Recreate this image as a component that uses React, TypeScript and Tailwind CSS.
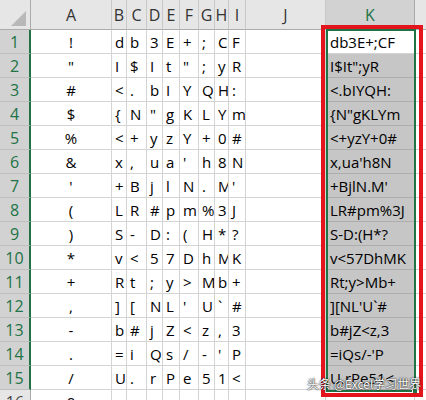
import React from "react";

const cols = ["A", "B", "C", "D", "E", "F", "G", "H", "I", "J", "K"];

const rows: string[] = [
  "db3E+;CF",
  "I$It\";yR",
  "<.bIYQH:",
  "{N\"gKLYm",
  "<+yzY+0#",
  "x,ua'h8N",
  "+BjlN.M'",
  "LR#pm%3J",
  "S-D:(H*?",
  "v<57DhMK",
  "Rt;y>Mb+",
  "][NL'U`#",
  "b#jZ<z,3",
  "=iQs/-'P",
  "U.rPe51<",
];

const font = { fontFamily: "'Open Sans', 'Noto Sans', sans-serif" };

function Row({ n, chars, selected }: { n: number; chars: string; selected: boolean }) {
  const letters = chars.split("");
  return (
    <>
      <div
        className={
          selected
            ? "flex h-6 items-center justify-center border-b border-r-2 border-b-[#bfbfbf] border-r-[#217346] bg-[#d2d2d2] text-[16px] text-[#217346]"
            : "flex h-6 items-center justify-center border-b border-r border-b-[#bfbfbf] border-r-[#ababab] bg-[#e6e6e6] text-[16px] text-[#444]"
        }
      >
        {n}
      </div>
      <div className="flex h-6 items-center justify-center border-b border-r border-[#d4d4d4] pt-[1px] text-[15px] text-black">
        {String.fromCharCode(32 + n)}
      </div>
      {Array.from({ length: 8 }).map((_, i) => (
        <div
          key={i}
          className="flex h-6 items-center overflow-hidden whitespace-pre border-b border-r border-[#d4d4d4] pl-[3px] pt-[1px] text-[15px] text-black"
        >
          {letters[i] === " " ? "" : letters[i]}
        </div>
      ))}
      <div className="h-6 border-b border-r border-[#d4d4d4]" />
      <div
        className={
          n === 1 || !selected
            ? "flex h-6 items-center whitespace-pre border-b border-r border-[#d4d4d4] bg-white pl-[4px] pt-[1px] text-[15px] text-black"
            : "flex h-6 items-center whitespace-pre border-b border-r border-[#adadad] bg-[#c6c6c6] pl-[4px] pt-[1px] text-[15px] text-black"
        }
      >
        {selected ? chars : ""}
      </div>
      <div className="h-6 border-b border-[#d4d4d4]" />
    </>
  );
}

export default function App() {
  return (
    <div className="relative h-[400px] w-[426px] overflow-hidden bg-white" style={font}>
      <div className="grid grid-cols-[31px_81px_15px_20px_16px_17px_19px_16px_14px_17px_80px_89px_1fr]">
        <div className="relative h-[30px] border-b border-r border-[#ababab] bg-[#e6e6e6]">
          <svg className="absolute bottom-[3px] right-[4px]" width="15" height="15" viewBox="0 0 15 15">
            <polygon points="15,0 15,15 0,15" fill="#b8b8b8" />
          </svg>
        </div>
        {cols.map((c) => (
          <div
            key={c}
            className={
              c === "K"
                ? "flex h-[30px] items-end justify-center border-b-2 border-r border-b-[#217346] border-r-[#ababab] bg-[#d2d2d2] pb-[1px] text-[16px] text-[#217346]"
                : "flex h-[30px] items-end justify-center border-b border-r border-b-[#ababab] border-r-[#c8c8c8] bg-[#e6e6e6] pb-[2px] text-[16px] text-[#333]"
            }
          >
            {c}
          </div>
        ))}
        <div className="h-[30px] border-b border-[#ababab] bg-[#e6e6e6]" />
        {rows.map((r, i) => (
          <Row key={i} n={i + 1} chars={r} selected />
        ))}
        <Row n={16} chars="" selected={false} />
      </div>

      {/* selection border */}
      <div className="pointer-events-none absolute left-[326px] top-[29px] h-[363px] w-[90px] border-2 border-[#217346]" />
      <div className="absolute left-[412px] top-[388px] h-[6px] w-[6px] border border-white bg-[#217346]" />
      {/* red highlight */}
      <div className="pointer-events-none absolute left-[321px] top-[25px] h-[372px] w-[102px] border-4 border-[#e3141c]" />

      <div
        className="absolute left-[307px] top-[375px] whitespace-nowrap text-[12px] text-white [text-shadow:0_0_2px_rgba(0,0,0,0.9),0_0_1px_rgba(0,0,0,0.9)]"
        style={{ fontFamily: "'Noto Sans CJK SC', sans-serif" }}
      >
        头条 @Excel学习世界
      </div>
    </div>
  );
}
